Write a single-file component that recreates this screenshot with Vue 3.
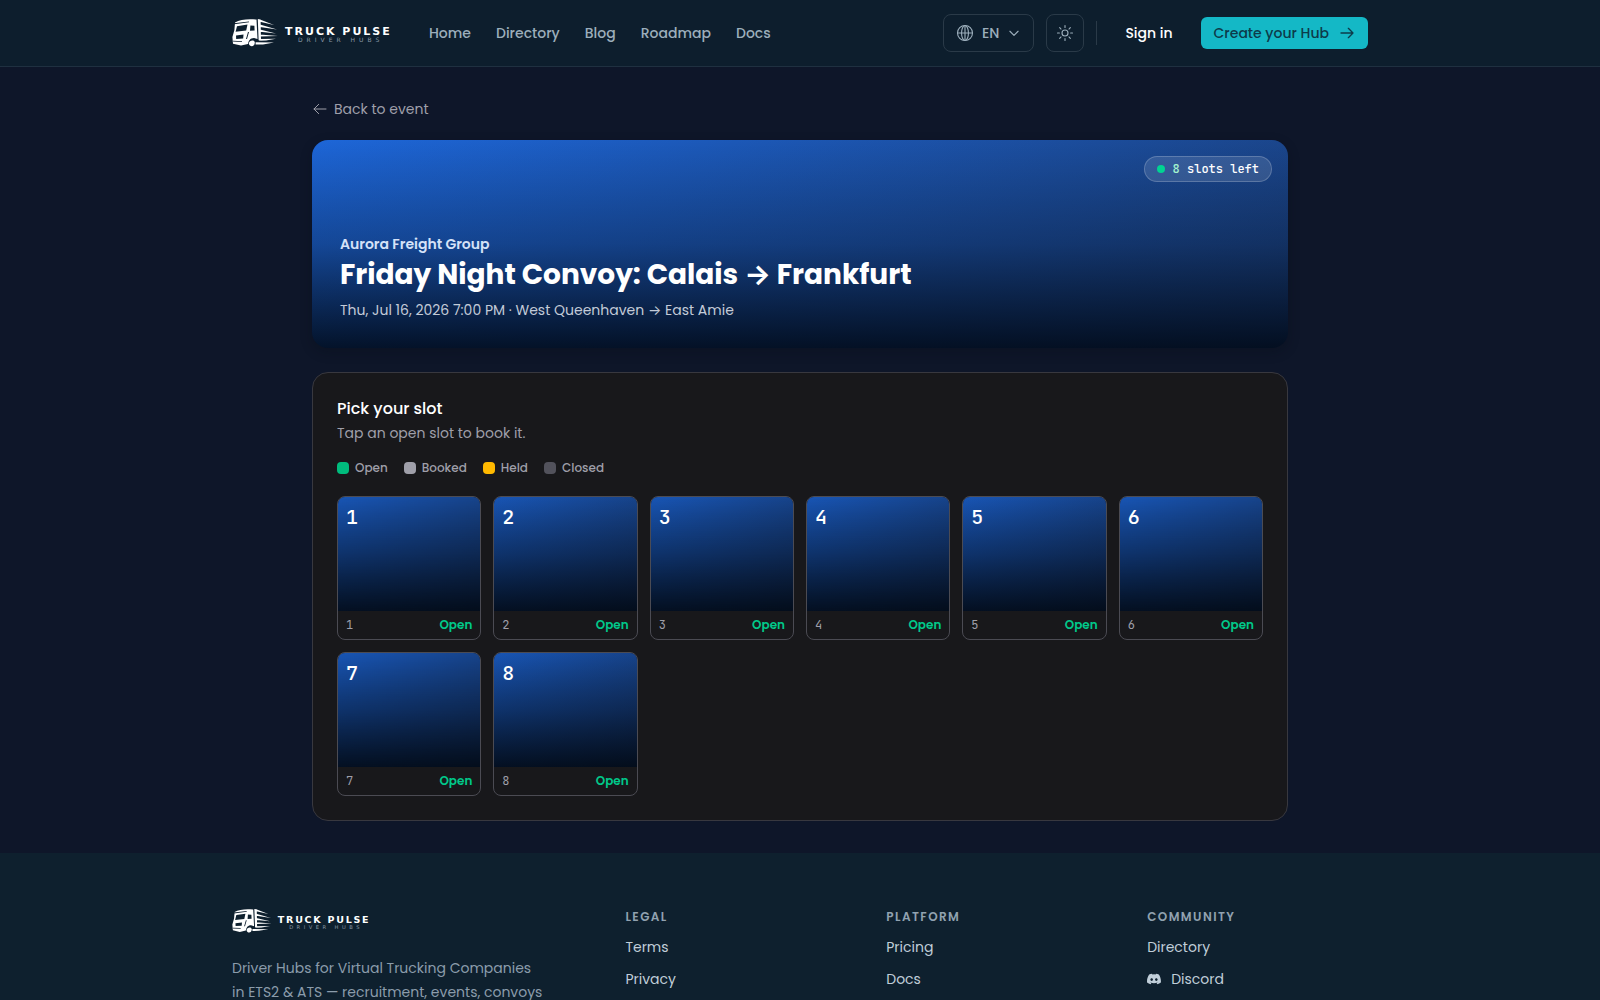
<template>
  <svg class="sprite" aria-hidden="true">
    <symbol id="truck" viewBox="0 0 48 30">
      <!-- cab -->
      <path fill="#fff" fill-rule="evenodd" d="M3 4.5 C8 1.5 16 .8 24.5 1.6 L25.5 21 L22 20 C18 20 16.5 23 16 26 L9 27.6 L1 25.8 L.4 19 L2.4 12 Z M5 8.2 L15.5 6.6 L14.2 12.6 L3.6 13.8 Z M18.4 7.4 L22.4 7.8 L22.6 12.4 L18 12.8 Z M4 17.5 L11.5 16.6 L11.2 20.5 L4.2 20.9 Z" />
      <path fill="#0d1e2d" d="M2 5.2 L17 3.4 L17 4.2 L2 6.2 Z M1 22.8 L10 23.2 L10 24 L1 23.6 Z M16 14 L17 14 L15 21 L14 21 Z" />
      <path fill="#fff" d="M16.8 25.6 C17 22.4 22.4 21.2 22.8 24.6 C22.8 29.2 17.6 29.6 16.8 25.6 Z" />
      <!-- trailer and speed lines -->
      <path fill="#fff" d="M25.8 1 L28.6 1.4 L29 22.6 L26.6 22.2 Z M28 1.4 L42 7 L28 3.8 Z M28 6.6 L45 11.6 L28 9 Z M28 11.6 L44 15.4 L28 13.8 Z M28 16.4 L46 18 L28 18.6 Z M27 21 L44 20.8 L34 22.6 L27 22.8 Z M23.6 24.2 L42 24.4 L31 26.4 L23.6 26.6 Z" />
    </symbol>
  </svg>

  <header class="site-header">
    <div class="container header-inner">
      <a href="#" class="brand" aria-label="Truck Pulse Driver Hubs">
        <svg class="logo" viewBox="0 0 164 30">
          <use href="#truck" width="48" height="30" />
          <text x="53" y="17" class="logo-name">TRUCK PULSE</text>
          <text x="66" y="24" class="logo-tag">DRIVER HUBS</text>
        </svg>
      </a>
      <nav class="main-nav">
        <a v-for="item in navItems" :key="item" href="#">{{ item }}</a>
      </nav>
      <div class="header-actions">
        <button type="button" class="btn-outline btn-lang">
          <svg width="18" height="18" viewBox="0 0 24 24" class="icon">
            <circle cx="12" cy="12" r="10" />
            <ellipse cx="12" cy="12" rx="4.6" ry="10" />
            <path d="M2 12h20M12 2v20" />
          </svg>
          <span>EN</span>
          <svg width="14" height="14" viewBox="0 0 24 24" class="icon chevron"><path d="m5 9 7 7 7-7" /></svg>
        </button>
        <button type="button" class="btn-outline btn-theme" aria-label="Toggle theme">
          <svg width="18" height="18" viewBox="0 0 24 24" class="icon">
            <circle cx="12" cy="12" r="4" />
            <path d="M12 2v2.500M12 19.500v2.500M2 12h2.500M19.500 12H22M4.900 4.900l1.800 1.800M17.300 17.300l1.800 1.800M4.900 19.100l1.800-1.800M17.300 6.700l1.800-1.800" />
          </svg>
        </button>
        <span class="separator"></span>
        <a href="#" class="sign-in">Sign in</a>
        <a href="#" class="btn-cta">
          Create your Hub
          <svg width="16" height="16" viewBox="0 0 24 24" class="icon"><path d="M3 12h18M14 5l7 7-7 7" /></svg>
        </a>
      </div>
    </div>
  </header>

  <main class="page">
    <a href="#" class="back-link">
      <svg width="16" height="16" viewBox="0 0 24 24" class="icon"><path d="M21 12H3M10 5l-7 7 7 7" /></svg>
      Back to event
    </a>

    <section class="hero">
      <div class="slots-left">
        <span class="dot"></span>
        <span><span class="count">{{ openCount }}</span> slots left</span>
      </div>
      <p class="hero-org">Aurora Freight Group</p>
      <h1>Friday Night Convoy: Calais → Frankfurt</h1>
      <p class="hero-meta">Thu, Jul 16, 2026 7:00 PM · West Queenhaven → East Amie</p>
    </section>

    <section class="card">
      <h2>Pick your slot</h2>
      <p class="card-sub">Tap an open slot to book it.</p>

      <ul class="legend">
        <li v-for="l in legend" :key="l.key">
          <span :class="['swatch', l.key]"></span>{{ l.label }}
        </li>
      </ul>

      <div class="slot-grid">
        <button v-for="s in slots" :key="s.id" type="button" :class="['slot', { selected: selected === s.id }]" @click="selected = s.id">
          <span class="slot-cover">{{ s.id }}</span>
          <span class="slot-footer">
            <span class="slot-name">{{ s.id }}</span>
            <span class="slot-status">Open</span>
          </span>
        </button>
      </div>
    </section>
  </main>

  <footer class="site-footer">
    <div class="container footer-grid">
      <div>
        <svg class="logo logo-small" viewBox="0 0 164 30">
          <use href="#truck" width="48" height="30" />
          <text x="53" y="17" class="logo-name">TRUCK PULSE</text>
          <text x="66" y="24" class="logo-tag">DRIVER HUBS</text>
        </svg>
        <p class="footer-text">Driver Hubs for Virtual Trucking Companies in ETS2 &amp; ATS — recruitment, events, convoys</p>
      </div>
      <div v-for="col in footerCols" :key="col.title">
        <h3>{{ col.title }}</h3>
        <ul class="footer-links">
          <li v-for="link in col.links" :key="link">
            <a href="#">
              <svg v-if="link === 'Discord'" width="14" height="14" viewBox="0 0 24 24" fill="currentColor">
                <path d="M20.300 4.400A19.800 19.800 0 0 0 15.400 2.900l-.6 1.300a18.300 18.300 0 0 0-5.500 0l-.7-1.300a19.700 19.700 0 0 0-4.900 1.500C.5 9-.3 13.600.1 18.100a19.900 19.900 0 0 0 6 3l1.300-2-1.900-.9.400-.3a14.200 14.200 0 0 0 12.100 0l.4.3-1.900.9 1.300 2a19.800 19.800 0 0 0 6-3c.500-5.200-.8-9.700-3.500-13.700zM8 15.300c-1.200 0-2.200-1.100-2.200-2.400s1-2.400 2.200-2.400 2.200 1.100 2.200 2.400-1 2.400-2.200 2.400zm8 0c-1.200 0-2.200-1.100-2.200-2.400s1-2.400 2.200-2.400 2.200 1.100 2.200 2.400-1 2.400-2.200 2.400z" />
              </svg>
              {{ link }}
            </a>
          </li>
        </ul>
      </div>
    </div>
  </footer>
</template>

<script setup>
import { ref, computed } from 'vue'

const navItems = ['Home', 'Directory', 'Blog', 'Roadmap', 'Docs']

const legend = [
  { key: 'open', label: 'Open' },
  { key: 'booked', label: 'Booked' },
  { key: 'held', label: 'Held' },
  { key: 'closed', label: 'Closed' }
]

const slots = ref(Array.from({ length: 8 }, (_, i) => ({ id: i + 1, status: 'open' })))
const selected = ref(null)

const openCount = computed(() => slots.value.filter(s => s.status === 'open').length)

const footerCols = [
  { title: 'Legal', links: ['Terms', 'Privacy'] },
  { title: 'Platform', links: ['Pricing', 'Docs'] },
  { title: 'Community', links: ['Directory', 'Discord'] }
]
</script>

<style>
body { margin: 0; background: #0e1629; color: #fff; font-family: Poppins, Inter, sans-serif; font-size: 14px; line-height: 24px; }
#app { display: flex; flex-direction: column; min-height: 100vh; }
</style>

<style scoped>
* { box-sizing: border-box; }
h1, h2, h3, p, ul { margin: 0; padding: 0; }
ul { list-style: none; }
a { color: inherit; text-decoration: none; }
button { font: inherit; color: inherit; cursor: pointer; }
.sprite { position: absolute; width: 0; height: 0; }
.icon { fill: none; stroke: currentColor; stroke-width: 1.5; stroke-linecap: round; stroke-linejoin: round; flex: none; }
.container { width: 100%; max-width: 1200px; margin: 0 auto; padding: 0 32px; }

.site-header { background: #0d1e2d; border-bottom: 1px solid #1f3040; }
.header-inner { display: flex; align-items: center; height: 66px; }
.brand { display: flex; }
.logo { display: block; width: 164px; height: 30px; }
.logo-small { width: 142px; height: 26px; }
.logo-name { fill: #fff; font: 700 11px 'DejaVu Sans', sans-serif; letter-spacing: 2px; }
.logo-tag { fill: #8a99a6; font: 6px 'DejaVu Sans', sans-serif; letter-spacing: 4px; }
.main-nav { display: flex; gap: 25px; margin-left: 33px; color: #9caebb; font-weight: 500; }
.header-actions { display: flex; align-items: center; gap: 12px; margin-left: auto; font-weight: 500; }
.btn-outline { display: flex; align-items: center; justify-content: center; height: 38px; padding: 0 12px; background: transparent; border: 1px solid #2a3a48; border-radius: 8px; color: #9caebb; }
.btn-lang { gap: 8px; }
.chevron { stroke-width: 2; }
.btn-theme { width: 38px; padding: 0; }
.separator { width: 1px; height: 24px; background: #2a3a48; }
.sign-in { padding: 0 16px; }
.btn-cta { display: flex; align-items: center; gap: 10px; height: 32px; padding: 0 13px; background: #14b8c6; color: #0d3b4a; border-radius: 6px; }
.btn-cta .icon { stroke-width: 2; }

.page { width: 100%; max-width: 1024px; margin: 0 auto; padding: 30px 24px 32px; }
.back-link { display: flex; align-items: center; gap: 6px; width: fit-content; color: #9f9fa9; }
.hero { position: relative; display: flex; flex-direction: column; justify-content: flex-end; min-height: 208px; margin-top: 19px; padding: 28px; border-radius: 16px; background: linear-gradient(to top, rgba(0, 8, 20, .88), rgba(0, 8, 20, .3) 50%, transparent), linear-gradient(135deg, #1d66d8, #1a3f7c); box-shadow: 0 4px 12px rgba(8, 12, 24, .3); }
.hero-org { color: #d5e2f8; font-weight: 600; }
.hero h1 { margin: 2px 0 8px; font-size: 28px; line-height: 34px; font-weight: 700; }
.hero-meta { color: #c3cbd8; line-height: 20px; }
.slots-left { position: absolute; top: 16px; right: 16px; display: flex; align-items: center; gap: 8px; height: 26px; padding: 0 12px; border: 1px solid rgba(255, 255, 255, .2); border-radius: 13px; background: rgba(255, 255, 255, .12); font: 500 12px/16px 'JetBrains Mono', 'DejaVu Sans Mono', monospace; }
.dot { width: 8px; height: 8px; border-radius: 50%; background: #00d492; }
.count { color: #a4f4cf; }

.card { margin-top: 24px; padding: 24px; background: #18181b; border: 1px solid #38383f; border-radius: 16px; }
.card h2 { font-size: 16px; line-height: 24px; font-weight: 500; }
.card-sub { color: #9f9fa9; }
.legend { display: flex; gap: 16px; margin: 15px 0 20px; color: #9f9fa9; font-size: 12px; line-height: 16px; font-weight: 500; }
.legend li { display: flex; align-items: center; gap: 6px; }
.swatch { width: 12px; height: 12px; border-radius: 4px; }
.swatch.open { background: #00bc7d; }
.swatch.booked { background: #9f9fa9; }
.swatch.held { background: #ffb900; }
.swatch.closed { background: #52525c; }
.slot-grid { display: grid; grid-template-columns: repeat(auto-fill, minmax(140px, 1fr)); gap: 12px; }
.slot { display: flex; flex-direction: column; padding: 0; overflow: hidden; background: #18181b; border: 1px solid #4b4b53; border-radius: 8px; text-align: left; }
.slot.selected { border-color: #00bc7d; }
.slot-cover { width: 100%; aspect-ratio: 5 / 4; padding: 8px; background: linear-gradient(to top, rgba(0, 6, 14, .88), rgba(0, 8, 20, .5) 50%, rgba(0, 8, 20, .18)), linear-gradient(135deg, #1d66d8, #1a3f7c); font: 500 20px/24px 'JetBrains Mono', 'DejaVu Sans Mono', monospace; }
.slot-footer { display: flex; align-items: center; justify-content: space-between; width: 100%; height: 28px; padding: 0 8px; font-size: 12px; line-height: 16px; }
.slot-name { color: #9f9fa9; font-family: 'JetBrains Mono', 'DejaVu Sans Mono', monospace; }
.slot-status { color: #00c98a; font-weight: 600; }

.site-footer { flex: 1; background: #0e202e; padding: 55px 0 24px; }
.footer-grid { display: grid; grid-template-columns: 1.6fr 1fr 1fr 1fr; gap: 40px; }
.footer-text { max-width: 313px; margin-top: 22px; color: #8b9cab; }
.site-footer h3 { color: #91a2b0; font-size: 12px; line-height: 18px; font-weight: 600; letter-spacing: 0.12em; text-transform: uppercase; }
.footer-links { display: flex; flex-direction: column; gap: 8px; margin-top: 9px; color: #c0ced9; }
.footer-links a { display: flex; align-items: center; gap: 10px; }
</style>
